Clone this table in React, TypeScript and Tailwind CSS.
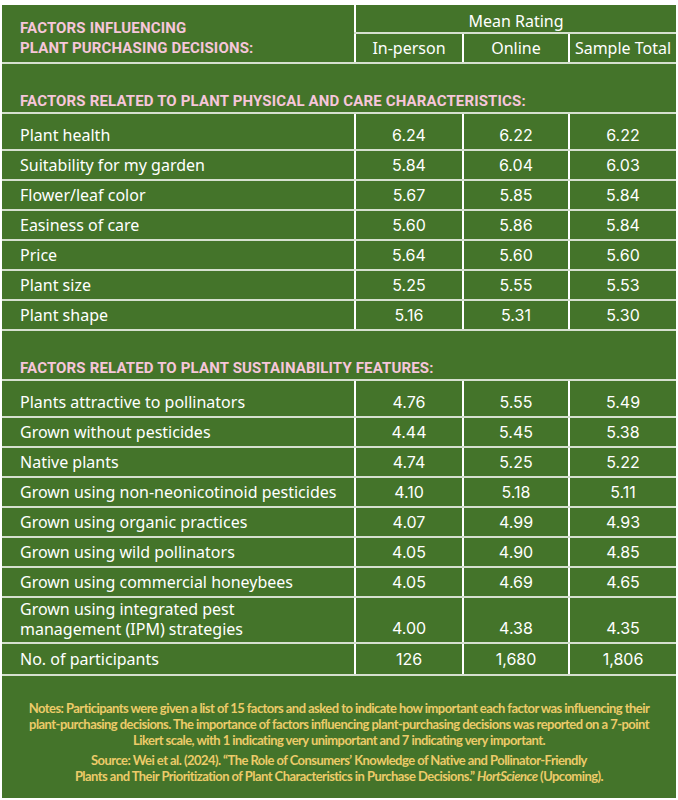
import React from 'react';

const physical = [
  ['Plant health', '6.24', '6.22', '6.22'],
  ['Suitability for my garden', '5.84', '6.04', '6.03'],
  ['Flower/leaf color', '5.67', '5.85', '5.84'],
  ['Easiness of care', '5.60', '5.86', '5.84'],
  ['Price', '5.64', '5.60', '5.60'],
  ['Plant size', '5.25', '5.55', '5.53'],
  ['Plant shape', '5.16', '5.31', '5.30'],
];

const sustainability = [
  ['Plants attractive to pollinators', '4.76', '5.55', '5.49'],
  ['Grown without pesticides', '4.44', '5.45', '5.38'],
  ['Native plants', '4.74', '5.25', '5.22'],
  ['Grown using non-neonicotinoid pesticides', '4.10', '5.18', '5.11'],
  ['Grown using organic practices', '4.07', '4.99', '4.93'],
  ['Grown using wild pollinators', '4.05', '4.90', '4.85'],
  ['Grown using commercial honeybees', '4.05', '4.69', '4.65'],
];

const label = "font-['Noto_Sans',sans-serif] text-[16px] leading-[22px] text-white";
const num = "font-['Inter',sans-serif] text-[16px] leading-[22px] text-white text-center";
const heading = "font-['Roboto',sans-serif] font-bold text-[15px] leading-[20px] tracking-[0.15px] text-[#f6c6da]";
const hline = 'border-b-2 border-[#d6e0cf]';
const vline = 'border-l-2 border-l-white';

function DataRow({ row, first }: { row: string[]; first?: boolean }) {
  const h = first ? 'h-[37px]' : 'h-[30px]';
  return (
    <tr className={h}>
      <td className={`${label} ${hline} align-bottom pl-[18px] pb-[3px]`}>{row[0]}</td>
      {row.slice(1).map((v, i) => (
        <td key={i} className={`${num} ${hline} ${vline} align-bottom pb-[3px]`}>
          {v}
        </td>
      ))}
    </tr>
  );
}

function SectionRow({ title }: { title: string }) {
  return (
    <tr className="h-[50px]">
      <td colSpan={4} className={`${hline} ${heading} align-bottom pl-[18px] pb-[1px]`}>
        {title}
      </td>
    </tr>
  );
}

export default function App() {
  return (
    <div className="w-[678px] bg-white pt-[5px] pl-[2px] pr-[2px] pb-[4px]">
      <div className="bg-[#44742a]">
        <table className="w-full border-collapse table-fixed">
          <colgroup>
            <col className="w-[353px]" />
            <col className="w-[108px]" />
            <col className="w-[106px]" />
            <col />
          </colgroup>
          <thead>
            <tr className="h-[28px]">
              <th rowSpan={2} className={`${hline} ${heading} text-left align-bottom pl-[18px] pb-[4px]`}>
                FACTORS INFLUENCING
                <br />
                PLANT PURCHASING DECISIONS:
              </th>
              <th
                colSpan={3}
                className={`${hline} ${vline} align-bottom pb-0 font-['Noto_Sans',sans-serif] font-normal text-[16px] leading-[22px] text-white`}
              >
                Mean Rating
              </th>
            </tr>
            <tr className="h-[30px]">
              {['In-person', 'Online', 'Sample Total'].map((t) => (
                <th
                  key={t}
                  className={`${hline} ${vline} align-middle font-['Noto_Sans',sans-serif] font-normal text-[16px] leading-[22px] text-white whitespace-nowrap`}
                >
                  {t}
                </th>
              ))}
            </tr>
          </thead>
          <tbody>
            <SectionRow title="FACTORS RELATED TO PLANT PHYSICAL AND CARE CHARACTERISTICS:" />
            {physical.map((r, i) => (
              <DataRow key={r[0]} row={r} first={i === 0} />
            ))}
            <SectionRow title="FACTORS RELATED TO PLANT SUSTAINABILITY FEATURES:" />
            {sustainability.map((r, i) => (
              <DataRow key={r[0]} row={r} first={i === 0} />
            ))}
            <tr className="h-[46px]">
              <td className={`${hline} align-bottom pl-[18px] pb-[3px] font-['Noto_Sans',sans-serif] text-[16px] leading-[20px] text-white`}>
                Grown using integrated pest
                <br />
                management (IPM) strategies
              </td>
              {['4.00', '4.38', '4.35'].map((v, i) => (
                <td key={i} className={`${num} ${hline} ${vline} align-bottom pb-[3px]`}>
                  {v}
                </td>
              ))}
            </tr>
            <tr className="h-[32px]">
              <td className={`${label} ${hline} align-middle pl-[18px]`}>No. of participants</td>
              {['126', '1,680', '1,806'].map((v, i) => (
                <td key={i} className={`${num} ${hline} ${vline} align-middle`}>
                  {v}
                </td>
              ))}
            </tr>
          </tbody>
        </table>
        <div className="pt-[24px] pb-[14px] text-center text-[#eccb69] font-['Lato',sans-serif] font-bold text-[13px] leading-[16px] tracking-[-0.55px] whitespace-nowrap">
          <p>
            Notes: Participants were given a list of 15 factors and asked to indicate how important each factor was influencing their
            <br />
            plant-purchasing decisions. The importance of factors influencing plant-purchasing decisions was reported on a 7-point
            <br />
            Likert scale, with 1 indicating very unimportant and 7 indicating very important.
          </p>
          <p className="mt-[4px]">
            Source: Wei et al. (2024). “The Role of Consumers’ Knowledge of Native and Pollinator-Friendly
            <br />
            Plants and Their Prioritization of Plant Characteristics in Purchase Decisions.” <i>HortScience</i> (Upcoming).
          </p>
        </div>
      </div>
    </div>
  );
}
